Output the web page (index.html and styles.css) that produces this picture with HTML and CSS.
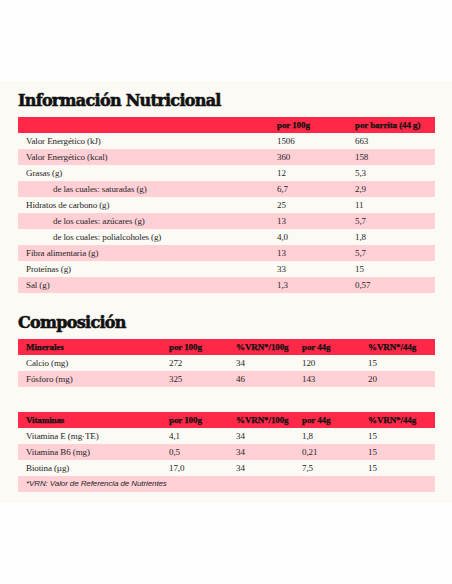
FILE: index.html
```html
<!DOCTYPE html>
<html lang="es">

<head>
    <meta charset="UTF-8">
    <meta name="viewport" content="width=device-width, initial-scale=1.0">
    <title>Información Nutricional</title>
    <link rel="stylesheet" href="styles.css">
</head>

<body>
    <div class="sheet">
        <h2 class="title">Información Nutricional</h2>
        <table class="nutri">
            <thead>
                <tr>
                    <th></th>
                    <th>por 100g</th>
                    <th>por barrita (44 g)</th>
                </tr>
            </thead>
            <tbody>
                <tr><td>Valor Energético (kJ)</td><td>1506</td><td>663</td></tr>
                <tr><td>Valor Energético (kcal)</td><td>360</td><td>158</td></tr>
                <tr><td>Grasas (g)</td><td>12</td><td>5,3</td></tr>
                <tr><td class="sub">de las cuales: saturadas (g)</td><td>6,7</td><td>2,9</td></tr>
                <tr><td>Hidratos de carbono (g)</td><td>25</td><td>11</td></tr>
                <tr><td class="sub">de los cuales: azúcares (g)</td><td>13</td><td>5,7</td></tr>
                <tr><td class="sub">de los cuales: polialcoholes (g)</td><td>4,0</td><td>1,8</td></tr>
                <tr><td>Fibra alimentaria (g)</td><td>13</td><td>5,7</td></tr>
                <tr><td>Proteínas (g)</td><td>33</td><td>15</td></tr>
                <tr><td>Sal (g)</td><td>1,3</td><td>0,57</td></tr>
            </tbody>
        </table>

        <h2 class="title second">Composición</h2>
        <table class="compo">
            <thead>
                <tr>
                    <th>Minerales</th>
                    <th>por 100g</th>
                    <th>%VRN*/100g</th>
                    <th>por 44g</th>
                    <th>%VRN*/44g</th>
                </tr>
            </thead>
            <tbody>
                <tr><td>Calcio (mg)</td><td>272</td><td>34</td><td>120</td><td>15</td></tr>
                <tr><td>Fósforo (mg)</td><td>325</td><td>46</td><td>143</td><td>20</td></tr>
            </tbody>
        </table>

        <table class="compo vitamins">
            <thead>
                <tr>
                    <th>Vitaminas</th>
                    <th>por 100g</th>
                    <th>%VRN*/100g</th>
                    <th>por 44g</th>
                    <th>%VRN*/44g</th>
                </tr>
            </thead>
            <tbody>
                <tr><td>Vitamina E (mg·TE)</td><td>4,1</td><td>34</td><td>1,8</td><td>15</td></tr>
                <tr><td>Vitamina B6 (mg)</td><td>0,5</td><td>34</td><td>0,21</td><td>15</td></tr>
                <tr><td>Biotina (µg)</td><td>17,0</td><td>34</td><td>7,5</td><td>15</td></tr>
                <tr><td class="note" colspan="5">*VRN: Valor de Referencia de Nutrientes</td></tr>
            </tbody>
        </table>
    </div>
</body>

</html>
```

FILE: styles.css
```css
body,
html {
    margin: 0;
    background-color: #fefefe;
    font-family: "Liberation Serif", serif;
}

.sheet {
    margin-top: 81px;
    height: 412px;
    padding: 10px 17px 0 18px;
    background-color: #fbfaf5;
    /* Cream panel behind the tables */
}

.title {
    margin: 0 0 6px 0;
    font-family: "DejaVu Serif", serif;
    font-size: 16px;
    line-height: 20px;
    font-weight: 700;
    letter-spacing: -0.7px;
    color: #111;
    -webkit-text-stroke: 0.6px #111;
    /* Heavier slab look */
}

.title.second {
    margin-top: 20px;
}

table {
    width: 100%;
    border-collapse: collapse;
    table-layout: fixed;
}

th,
td {
    height: 16px;
    padding: 0 0 0 8px;
    text-align: left;
    font-size: 9px;
    line-height: 16px;
    white-space: nowrap;
}

th {
    background-color: #ff2848;
    /* Red header band */
    color: #111;
    font-weight: 700;
    letter-spacing: -0.1px;
    -webkit-text-stroke: 0.25px #111;
}

td {
    color: #262626;
    letter-spacing: -0.1px;
}

tbody tr:nth-child(even) td {
    background-color: #ffd0d6;
    /* Pink stripe */
}

.nutri th:nth-child(1) {
    width: 243px;
}

.nutri th:nth-child(2) {
    width: 70px;
}

td.sub {
    padding-left: 35px;
}

.compo th:nth-child(1) {
    width: 135px;
}

.compo th:nth-child(2) {
    width: 59px;
}

.compo th:nth-child(3),
.compo th:nth-child(4) {
    width: 58px;
}

.vitamins {
    margin-top: 25px;
}

td.note {
    font-family: "Liberation Sans", sans-serif;
    font-style: italic;
    font-size: 8px;
    letter-spacing: -0.1px;
}
```
